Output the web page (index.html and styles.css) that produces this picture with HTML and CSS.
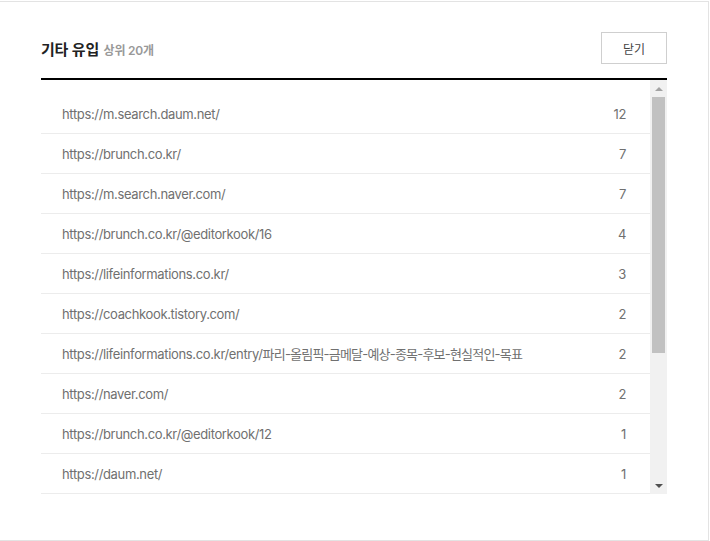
FILE: index.html
```html
<!DOCTYPE html>
<html lang="ko">
<head>
  <meta charset="UTF-8" />
  <meta name="viewport" content="width=device-width, initial-scale=1.0" />
  <title>기타 유입</title>
  <link rel="stylesheet" href="styles.css">
</head>
<body>

  <div class="modal">
    <div class="modal-head">
      <h2 class="title">기타 유입 <span class="sub">상위 20개</span></h2>
      <button class="close-btn" type="button">닫기</button>
    </div>

    <div class="list-wrap">
      <ul class="list">
        <li class="row"><span class="url">https://m.search.daum.net/</span><span class="count">12</span></li>
        <li class="row"><span class="url">https://brunch.co.kr/</span><span class="count">7</span></li>
        <li class="row"><span class="url">https://m.search.naver.com/</span><span class="count">7</span></li>
        <li class="row"><span class="url">https://brunch.co.kr/@editorkook/16</span><span class="count">4</span></li>
        <li class="row"><span class="url">https://lifeinformations.co.kr/</span><span class="count">3</span></li>
        <li class="row"><span class="url">https://coachkook.tistory.com/</span><span class="count">2</span></li>
        <li class="row"><span class="url">https://lifeinformations.co.kr/entry/<span class="ko">파리-올림픽-금메달-예상-종목-후보-현실적인-목표</span></span><span class="count">2</span></li>
        <li class="row"><span class="url">https://naver.com/</span><span class="count">2</span></li>
        <li class="row"><span class="url">https://brunch.co.kr/@editorkook/12</span><span class="count">1</span></li>
        <li class="row"><span class="url">https://daum.net/</span><span class="count">1</span></li>
      </ul>
      <div class="scrollbar">
        <div class="sb-btn"><span class="arrow-up"></span></div>
        <div class="sb-track">
          <div class="sb-thumb"></div>
        </div>
        <div class="sb-btn"><span class="arrow-down"></span></div>
      </div>
    </div>
  </div>

</body>
</html>
```

FILE: styles.css
```css
html, body {
  margin: 0;
  background: #fff;
  font-family: Inter, "Noto Sans CJK KR", sans-serif;
}
body {
  padding-top: 1px;
}
.modal {
  box-sizing: border-box;
  width: 709px;
  height: 540px;
  border: 1px solid #e3e3e3;
  border-left: none;
  padding: 30px 41px 0 41px;
}
.modal-head {
  display: flex;
  justify-content: space-between;
  align-items: center;
  padding-bottom: 14px;
  border-bottom: 2px solid #000;
}
.title {
  margin: 0;
  font-size: 15px;
  font-weight: 600;
  color: #222;
  letter-spacing: -0.2px;
}
.sub {
  font-size: 12px;
  font-weight: 600;
  color: #999;
  letter-spacing: -0.2px;
  margin-left: 1px;
}
.close-btn {
  width: 66px;
  height: 32px;
  border: 1px solid #cfcfcf;
  background: #fff;
  color: #444;
  font-family: inherit;
  font-size: 12px;
  padding: 0;
}
.list-wrap {
  display: flex;
  height: 414px;
}
.list {
  flex: 1;
  margin: 0;
  padding: 14px 0 0;
  list-style: none;
  overflow: hidden;
}
.row {
  box-sizing: border-box;
  height: 40px;
  display: flex;
  justify-content: space-between;
  align-items: center;
  padding: 0 24px 0 21px;
  border-bottom: 1px solid #ececec;
  font-size: 13px;
  letter-spacing: -0.35px;
  color: #707070;
}
.ko {
  letter-spacing: -0.8px;
}
.scrollbar {
  width: 17px;
  display: flex;
  flex-direction: column;
  background: #f1f1f1;
}
.sb-btn {
  height: 17px;
  display: flex;
  justify-content: center;
  align-items: center;
}
.arrow-up {
  width: 0;
  height: 0;
  border-left: 4px solid transparent;
  border-right: 4px solid transparent;
  border-bottom: 4px solid #a3a3a3;
}
.arrow-down {
  width: 0;
  height: 0;
  border-left: 4px solid transparent;
  border-right: 4px solid transparent;
  border-top: 4px solid #505050;
}
.sb-track {
  flex: 1;
  padding: 0 2px;
}
.sb-thumb {
  height: 256px;
  background: #c1c1c1;
}
```
